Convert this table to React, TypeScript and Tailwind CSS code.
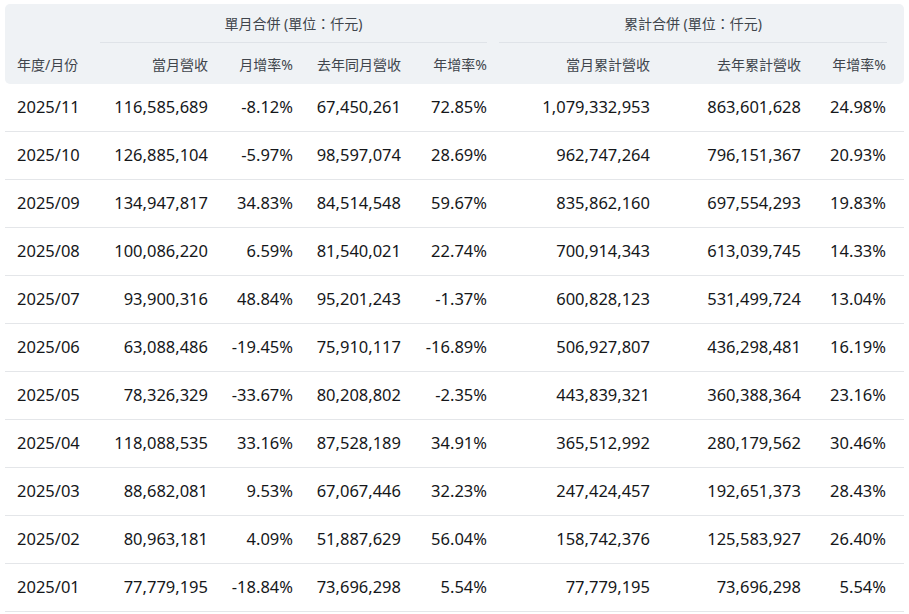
const rows: string[][] = [
  ['2025/11', '116,585,689', '-8.12%', '67,450,261', '72.85%', '1,079,332,953', '863,601,628', '24.98%'],
  ['2025/10', '126,885,104', '-5.97%', '98,597,074', '28.69%', '962,747,264', '796,151,367', '20.93%'],
  ['2025/09', '134,947,817', '34.83%', '84,514,548', '59.67%', '835,862,160', '697,554,293', '19.83%'],
  ['2025/08', '100,086,220', '6.59%', '81,540,021', '22.74%', '700,914,343', '613,039,745', '14.33%'],
  ['2025/07', '93,900,316', '48.84%', '95,201,243', '-1.37%', '600,828,123', '531,499,724', '13.04%'],
  ['2025/06', '63,088,486', '-19.45%', '75,910,117', '-16.89%', '506,927,807', '436,298,481', '16.19%'],
  ['2025/05', '78,326,329', '-33.67%', '80,208,802', '-2.35%', '443,839,321', '360,388,364', '23.16%'],
  ['2025/04', '118,088,535', '33.16%', '87,528,189', '34.91%', '365,512,992', '280,179,562', '30.46%'],
  ['2025/03', '88,682,081', '9.53%', '67,067,446', '32.23%', '247,424,457', '192,651,373', '28.43%'],
  ['2025/02', '80,963,181', '4.09%', '51,887,629', '56.04%', '158,742,376', '125,583,927', '26.40%'],
  ['2025/01', '77,779,195', '-18.84%', '73,696,298', '5.54%', '77,779,195', '73,696,298', '5.54%'],
]

const subHeaders = ['當月營收', '月增率%', '去年同月營收', '年增率%', '當月累計營收', '去年累計營收', '年增率%']

const cols = 'grid grid-cols-[95px_120px_85px_108px_86px_163px_151px_91px]'

export default function App() {
  return (
    <div className="min-h-screen bg-white px-[5px] pt-[4px] font-['Noto_Sans','Noto_Sans_CJK_TC',sans-serif]">
      {/* Header */}
      <div className={`${cols} grid-rows-[39px_41px] rounded-[5px] bg-[#eff2f5] text-[14px] text-[#40454c]`}>
        <div className="col-span-4 col-start-2 row-start-1 flex flex-col pr-3">
          <div className="flex flex-1 items-center justify-center border-b border-[#dfe3e8] pt-[1px]">
            單月合併 (單位：仟元)
          </div>
        </div>
        <div className="col-span-3 col-start-6 row-start-1 flex flex-col pr-[17px]">
          <div className="flex flex-1 items-center justify-center border-b border-[#dfe3e8] pt-[1px]">
            累計合併 (單位：仟元)
          </div>
        </div>
        <div className="col-start-1 row-start-2 flex items-center pl-3 pt-[2px]">年度/月份</div>
        {subHeaders.map((h, i) => (
          <div
            key={i}
            className={`row-start-2 flex items-center justify-end pt-[2px] ${i === 6 ? 'pr-[18px]' : 'pr-3'}`}
          >
            {h}
          </div>
        ))}
      </div>

      {/* Body */}
      {rows.map((r) => (
        <div key={r[0]} className={`${cols} h-12 border-b border-[#e4e6e9] text-[16.5px] text-[#15171a]`}>
          {r.map((v, i) => (
            <div
              key={i}
              className={`flex items-center ${
                i === 0 ? 'pl-3' : i === 7 ? 'justify-end pr-[18px]' : 'justify-end pr-3'
              }`}
            >
              {v}
            </div>
          ))}
        </div>
      ))}
    </div>
  )
}
